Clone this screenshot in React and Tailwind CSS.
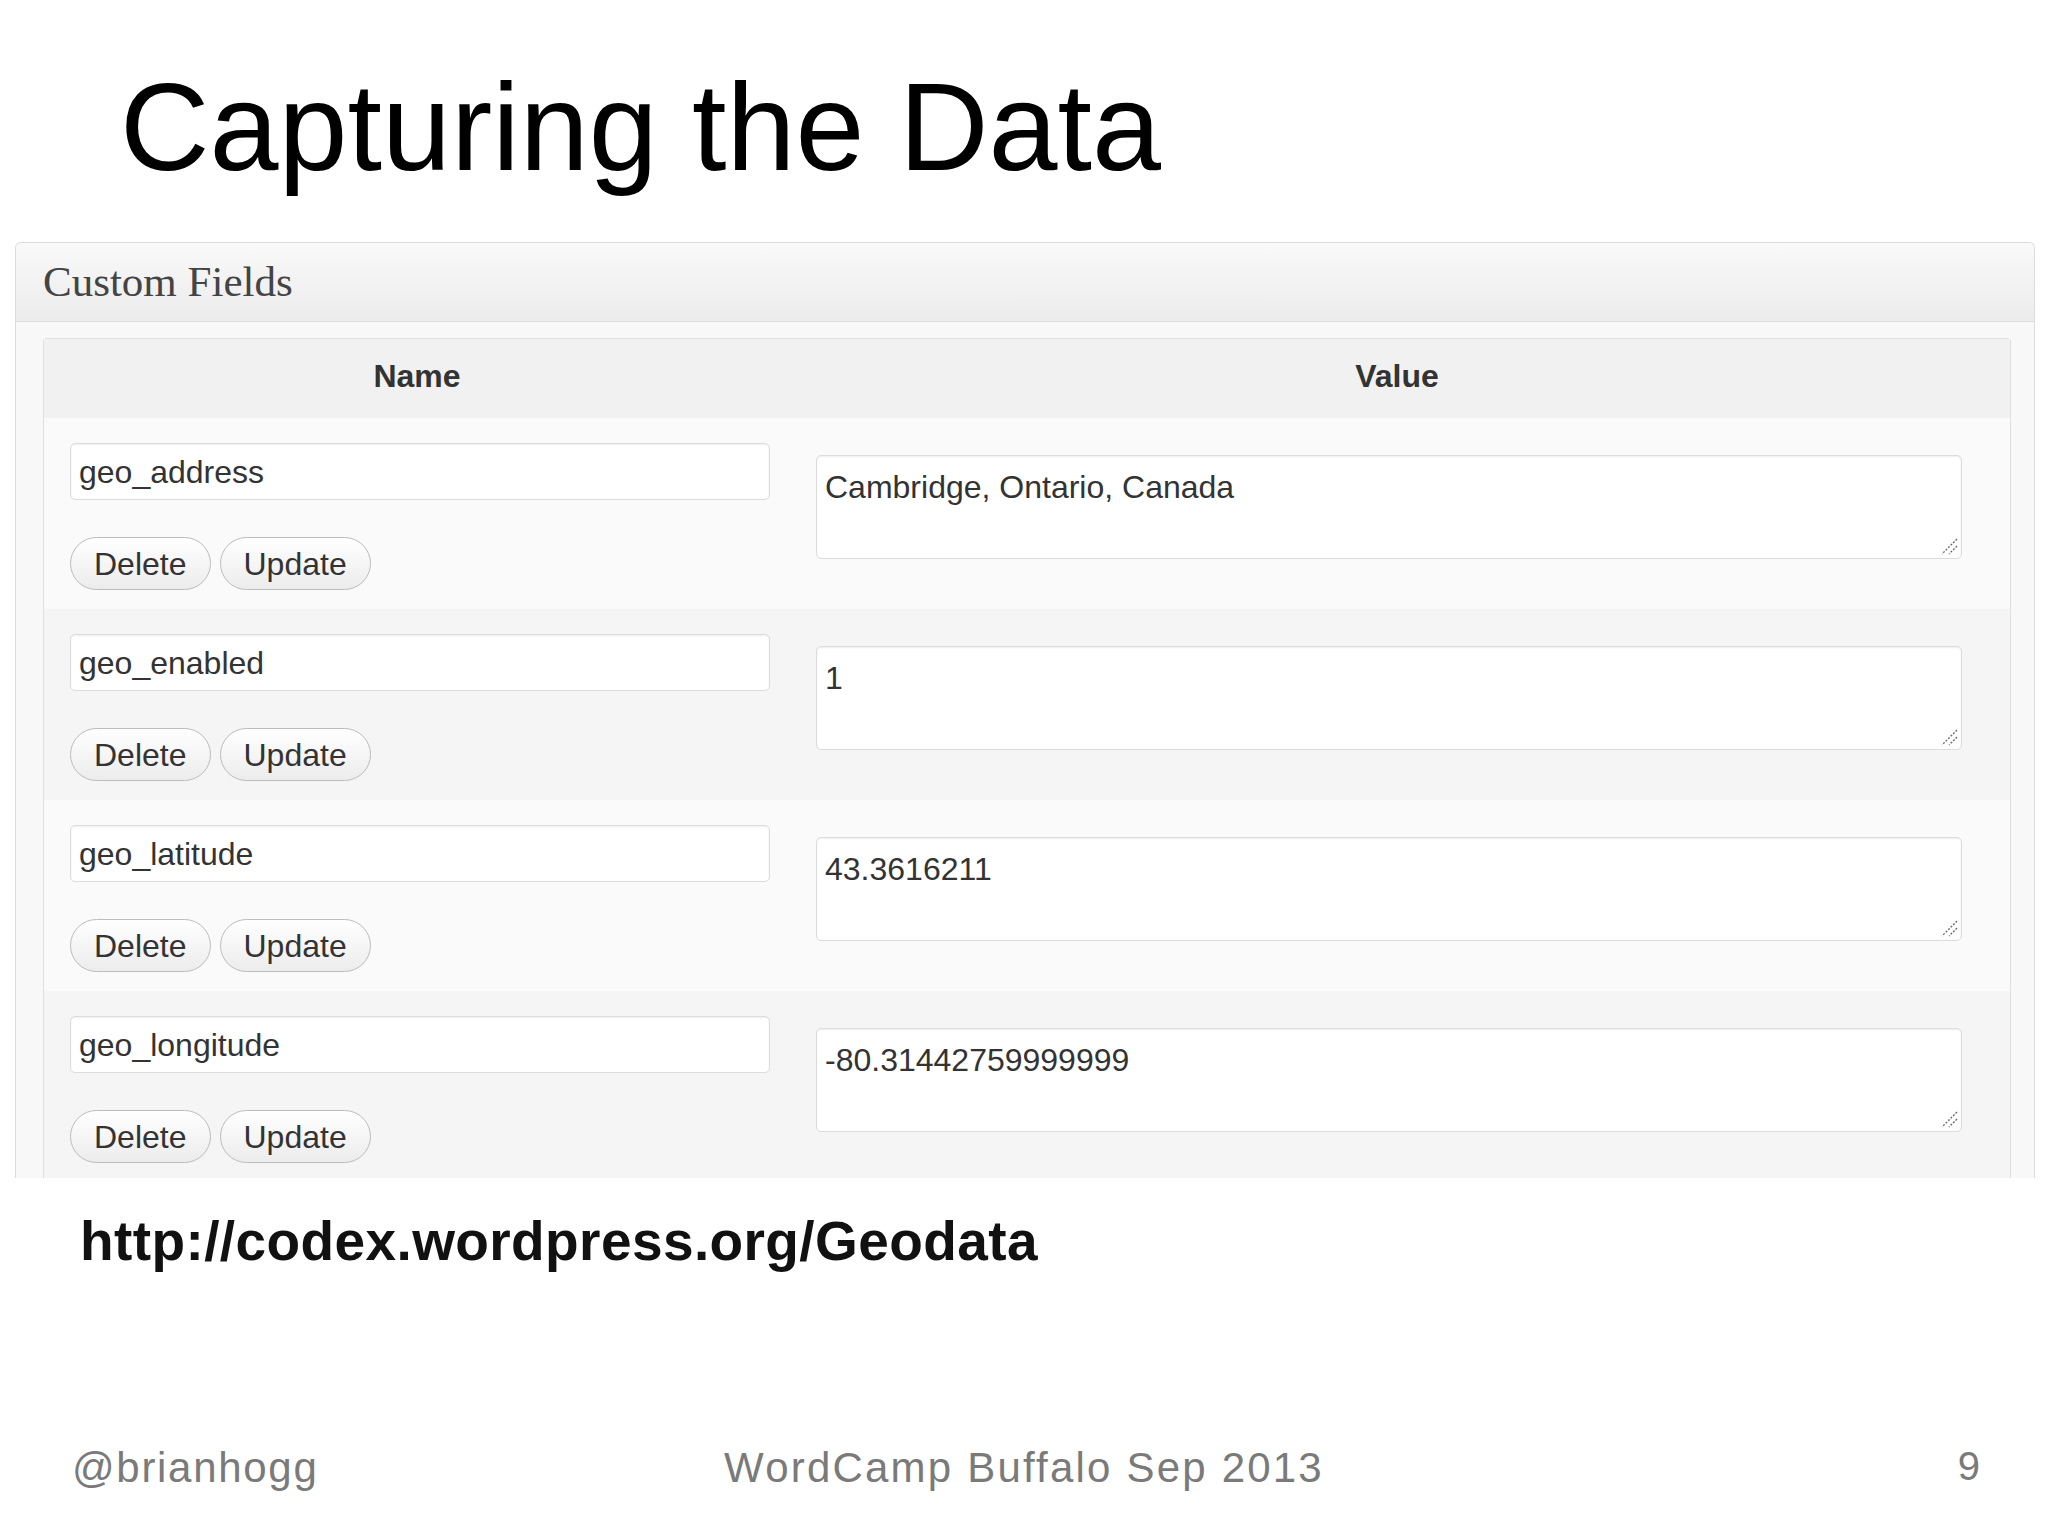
import React from 'react';

const fields = [
  { name: 'geo_address', value: 'Cambridge, Ontario, Canada' },
  { name: 'geo_enabled', value: '1' },
  { name: 'geo_latitude', value: '43.3616211' },
  { name: 'geo_longitude', value: '-80.31442759999999' },
];

// little resize grip drawn in the textarea corner
const Grip = () => (
  <svg className="absolute right-[3px] bottom-[3px]" width="18" height="18" viewBox="0 0 18 18">
    <line x1="17" y1="2" x2="2" y2="17" stroke="#6b6b6b" strokeWidth="1.4" strokeDasharray="2 1.5" />
    <line x1="17" y1="9" x2="9" y2="17" stroke="#6b6b6b" strokeWidth="1.4" strokeDasharray="2 1.5" />
  </svg>
);

const Button = ({ children }) => (
  <div className="h-[53px] px-[23px] flex items-center rounded-full border border-[#bcbcbc] bg-gradient-to-b from-white to-[#ececec] text-[32px] text-[#333]">
    {children}
  </div>
);

const FieldRow = ({ name, value, shaded }) => (
  <div className={`grid grid-cols-[746px_1fr] h-[191px] ${shaded ? 'bg-[#f5f5f5]' : 'bg-[#fafafa]'}`}>
    {/* Name cell */}
    <div className="pl-[26px] pr-[20px] pt-[25px]">
      <div className="h-[57px] flex items-center pl-[8px] bg-white border border-[#dcdcdc] rounded-[5px] shadow-[inset_0_1px_2px_rgba(0,0,0,0.07)] text-[32px] text-[#333]">
        {name}
      </div>
      <div className="mt-[37px] flex gap-[9px]">
        <Button>Delete</Button>
        <Button>Update</Button>
      </div>
    </div>

    {/* Value cell */}
    <div className="pl-[26px] pr-[48px] pt-[37px]">
      <div className="relative h-[104px] pt-[7px] pl-[8px] bg-white border border-[#dcdcdc] rounded-[5px] shadow-[inset_0_1px_2px_rgba(0,0,0,0.07)] text-[32px] text-[#333]">
        {value}
        <Grip />
      </div>
    </div>
  </div>
);

export default function App() {
  return (
    <div className="w-[2048px] h-[1536px] bg-white overflow-hidden font-['Liberation_Sans',Arial,sans-serif]">
      {/* Slide title */}
      <h1 className="pt-[65px] pl-[120px] text-[124px] leading-none text-black">Capturing the Data</h1>

      {/* Custom Fields meta box (cropped at the bottom) */}
      <div className="mt-[53px] ml-[15px] w-[2020px] h-[936px] overflow-hidden border-x border-t border-[#dcdcdc] rounded-t-[6px] bg-[#f8f8f8]">
        <div className="h-[79px] flex items-center pl-[27px] border-b border-[#dcdcdc] bg-gradient-to-b from-[#f9f9f9] to-[#ececec]">
          <span className="font-['Liberation_Serif',Georgia,serif] text-[43px] text-[#444]">Custom Fields</span>
        </div>

        <div className="pt-[16px] pl-[27px] pr-[23px]">
          <div className="border-x border-t border-[#dfdfdf] rounded-t-[4px]">
            <div className="grid grid-cols-[746px_1fr] h-[79px] bg-[#f1f1f1] font-bold text-[32px] text-[#333]">
              <div className="flex items-center justify-center pb-[5px]">Name</div>
              <div className="flex items-center justify-center pb-[5px] pr-[6px]">Value</div>
            </div>
            {fields.map((f, i) => (
              <FieldRow key={f.name} name={f.name} value={f.value} shaded={i % 2 === 1} />
            ))}
          </div>
        </div>
      </div>

      {/* Link */}
      <div className="mt-[36px] pl-[80px] text-[55px] leading-none font-bold tracking-[0.4px] text-[#111]">
        http://codex.wordpress.org/Geodata
      </div>

      {/* Footer */}
      <div className="mt-[177px] grid grid-cols-[1fr_auto_1fr] items-start leading-none text-[#7a7a7a]">
        <div className="mt-[1px] pl-[72px] text-[42px] tracking-[1.7px]">@brianhogg</div>
        <div className="mt-[1px] text-[42px] tracking-[2.2px]">WordCamp Buffalo Sep 2013</div>
        <div className="flex justify-end pr-[68px] text-[40px]">9</div>
      </div>
    </div>
  );
}
